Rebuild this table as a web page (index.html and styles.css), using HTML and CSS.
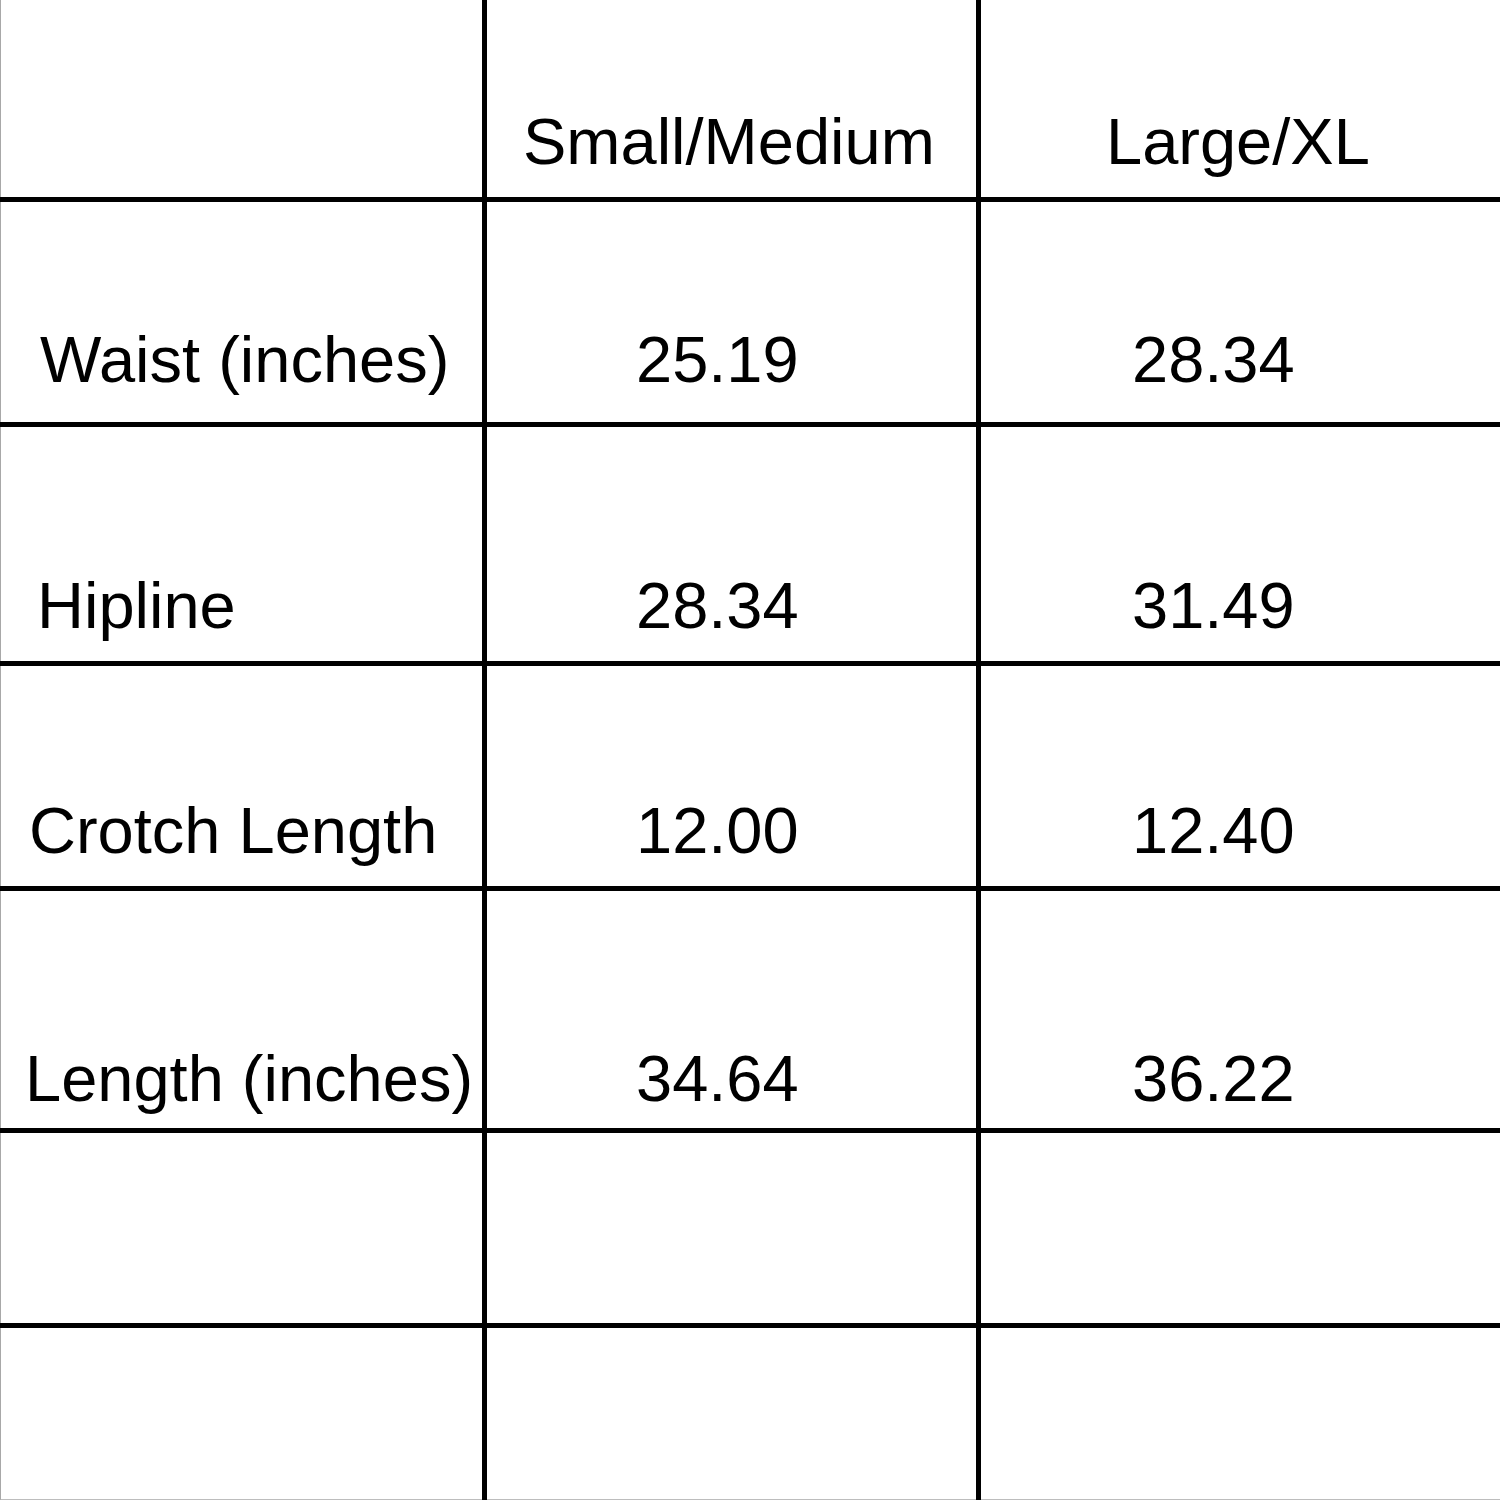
FILE: index.html
```html
<!DOCTYPE html>
<html>
<head>
<meta charset="utf-8">
<link rel="stylesheet" href="styles.css">
</head>
<body>
<div class="table">
  <div class="row row-head">
    <div class="cell c1"></div>
    <div class="cell c2 head2">Small/Medium</div>
    <div class="cell c3 head3">Large/XL</div>
  </div>
  <div class="row row-waist">
    <div class="cell c1 lab-waist">Waist (inches)</div>
    <div class="cell c2 val">25.19</div>
    <div class="cell c3 val">28.34</div>
  </div>
  <div class="row row-hip">
    <div class="cell c1 lab-hip">Hipline</div>
    <div class="cell c2 val">28.34</div>
    <div class="cell c3 val">31.49</div>
  </div>
  <div class="row row-crotch">
    <div class="cell c1 lab-crotch">Crotch Length</div>
    <div class="cell c2 val">12.00</div>
    <div class="cell c3 val">12.40</div>
  </div>
  <div class="row row-length">
    <div class="cell c1 lab-length">Length (inches)</div>
    <div class="cell c2 val">34.64</div>
    <div class="cell c3 val">36.22</div>
  </div>
  <div class="row row-empty">
    <div class="cell c1"></div>
    <div class="cell c2"></div>
    <div class="cell c3"></div>
  </div>
  <div class="row row-last">
    <div class="cell c1"></div>
    <div class="cell c2"></div>
    <div class="cell c3"></div>
  </div>
</div>
</body>
</html>
```
FILE: styles.css
```css
html, body {
  margin: 0;
  padding: 0;
  background: #fff;
}
body {
  width: 1500px;
  height: 1500px;
  overflow: hidden;
  font-family: "Liberation Sans", Arial, sans-serif;
  color: #000;
}
.table {
  display: grid;
  grid-template-columns: 482px 489px 519px;
  grid-template-rows: 197px 220px 234px 220px 237px 190px 173px;
  gap: 5px;
  background: #000;
  width: 1500px;
  height: 1500px;
}
.row {
  display: contents;
}
.cell {
  background: #fff;
  display: flex;
  align-items: flex-end;
  font-size: 65px;
  line-height: 64px;
  white-space: nowrap;
  box-sizing: border-box;
}
.c1 {
  border-left: 1px solid #a8a8a8;
}
.row-last .cell {
  border-bottom: 2px solid #bdbdbd;
}
.row-head .cell { padding-bottom: 23px; }
.row-waist .cell { padding-bottom: 30px; }
.row-hip .cell { padding-bottom: 23px; }
.row-crotch .cell { padding-bottom: 23px; }
.row-length .cell { padding-bottom: 17px; }

.head2 { padding-left: 36px; }
.head3 { padding-left: 125px; }
.c2.val { padding-left: 149px; }
.c3.val { padding-left: 151px; }
.lab-waist { padding-left: 39px; }
.lab-hip { padding-left: 36px; }
.lab-crotch { padding-left: 28px; }
.lab-length { padding-left: 24px; }
```
